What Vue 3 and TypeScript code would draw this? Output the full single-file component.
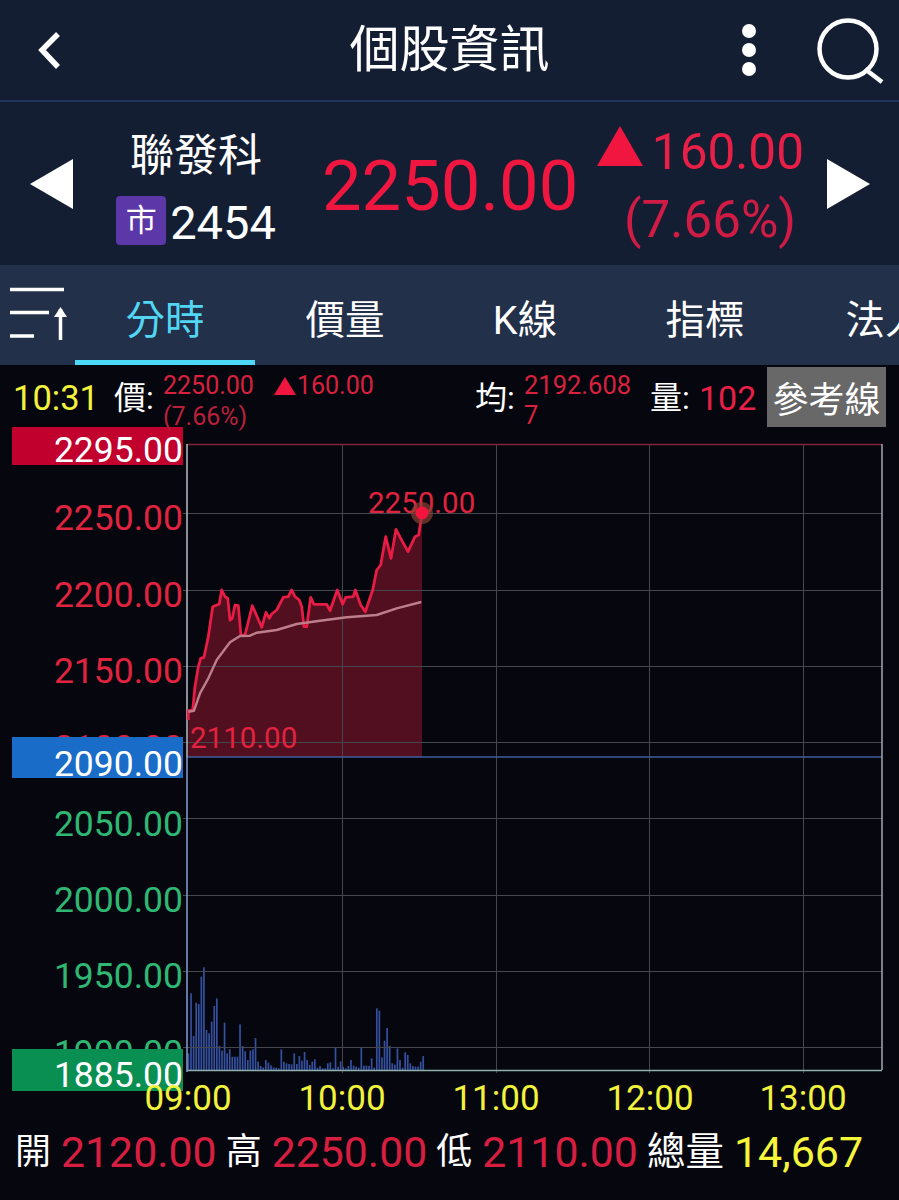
<template>
  <div class="page">
    <!-- 標題列 -->
    <header class="topbar">
      <svg class="back" width="30" height="40" viewBox="0 0 30 40">
        <path d="M24 4 L8 20 L24 37" fill="none" stroke="#fff" stroke-width="5.5" />
      </svg>
      <h1 class="title">個股資訊</h1>
      <div class="dots"><i></i><i></i><i></i></div>
      <svg class="search" width="68" height="68" viewBox="0 0 68 68">
        <circle cx="32" cy="31" r="28.5" fill="none" stroke="#fff" stroke-width="4.5" />
        <path d="M49 51 L66 64" fill="none" stroke="#fff" stroke-width="4.5" />
      </svg>
    </header>

    <!-- 報價 -->
    <section class="quote">
      <div class="tri tri-left"></div>
      <div class="name">
        <div class="stock">聯發科</div>
        <div class="code"><span class="badge">市</span><span class="code-no">2454</span></div>
      </div>
      <div class="price">2250.00</div>
      <div class="change">
        <div class="change-top"><span class="up"></span>160.00</div>
        <div class="pct">(7.66%)</div>
      </div>
      <div class="tri tri-right"></div>
    </section>

    <!-- 分頁 -->
    <nav class="tabs">
      <svg class="sort" width="75" height="60" viewBox="0 0 75 60">
        <path d="M10 9.5H64M10 32.5H49M10 56H34M60.5 60V29" fill="none" stroke="#fff" stroke-width="3.5" />
        <path d="M54 37 L60.5 27 L67 37 Z" fill="#fff" />
      </svg>
      <div v-for="(t, i) in tabs" :key="t" :class="['tab', { active: i === 0 }]">{{ t }}</div>
    </nav>

    <!-- 走勢資訊 -->
    <section class="info">
      <span class="time">10:31</span>
      <span class="lbl lbl-price">價:</span>
      <div class="info-price">
        <div class="info-line">2250.00<span class="up-small"></span>160.00</div>
        <div class="info-line dim">(7.66%)</div>
      </div>
      <span class="lbl lbl-avg">均:</span>
      <div class="info-avg">2192.6087</div>
      <span class="lbl lbl-vol">量:</span>
      <span class="vol">102</span>
      <button class="ref">參考線</button>
    </section>

    <!-- 走勢圖：座標直接對應畫面像素 -->
    <svg class="chart" width="899" height="698" viewBox="0 427 899 698">
      <polygon :points="areaPoints" fill="#510f20" />
      <rect v-for="b in bars" :key="b.x" :x="b.x" :y="b.y" width="1.7" :height="b.h" fill="#34509f" />

      <g stroke="#45474f" stroke-width="1">
        <line v-for="x in gridX" :key="x" :x1="x + 0.5" y1="444" :x2="x + 0.5" y2="1073" />
        <line v-for="y in gridY" :key="y" x1="183" :y1="y + 0.5" x2="882" :y2="y + 0.5" />
      </g>
      <line x1="187" y1="444.5" x2="882" y2="444.5" stroke="#84203a" stroke-width="1.4" />
      <line x1="187" y1="757" x2="882" y2="757" stroke="#3e5f9e" stroke-width="1.4" />
      <line x1="187" y1="1070.5" x2="882" y2="1070.5" stroke="#8fb0ad" stroke-width="1.6" />
      <line x1="187" y1="444" x2="187" y2="757" stroke="#aeb4bd" stroke-width="1.6" />
      <line x1="187" y1="757" x2="187" y2="1072" stroke="#7d97c8" stroke-width="1.6" />
      <line x1="882" y1="444" x2="882" y2="1070" stroke="#aeb4bd" stroke-width="1.4" />

      <text x="368" y="513" class="t-mid red">2250.00</text>
      <text x="190" y="748" class="t-mid red">2110.00</text>

      <polyline :points="pricePoints" fill="none" stroke="#e91c45" stroke-width="2.8" stroke-linejoin="round" />
      <polyline :points="avgPoints" fill="none" stroke="#bd7f8b" stroke-width="2.4" stroke-linejoin="round" />
      <circle cx="422" cy="513" r="11" fill="#8a4035" opacity="0.7" />
      <circle cx="422" cy="513" r="6.5" fill="#f5143f" />

      <text v-for="l in axisLabels" :key="l.text" x="183" :y="l.y" text-anchor="end" :class="['t-axis', l.cls]">{{ l.text }}</text>

      <rect x="12" y="427" width="171" height="38" fill="#c1002e" />
      <text x="183" y="462" text-anchor="end" class="t-axis white">2295.00</text>
      <rect x="12" y="737" width="171" height="41" fill="#1a6cc9" />
      <text x="183" y="776" text-anchor="end" class="t-axis white">2090.00</text>
      <rect x="12" y="1049" width="171" height="42" fill="#0a8f53" />
      <text x="183" y="1087" text-anchor="end" class="t-axis white">1885.00</text>

      <text v-for="t in timeLabels" :key="t.text" :x="t.x" y="1110" text-anchor="middle" class="t-time">{{ t.text }}</text>
    </svg>

    <!-- 開高低量 -->
    <footer class="stats">
      <div class="stat"><span>開</span><b>2120.00</b></div>
      <div class="stat"><span>高</span><b>2250.00</b></div>
      <div class="stat"><span>低</span><b>2110.00</b></div>
      <div class="stat"><span class="total-label">總量</span><b class="total">14,667</b></div>
    </footer>
  </div>
</template>

<script setup lang="ts">
const tabs = ['分時', '價量', 'K線', '指標', '法人']

const gridX = [342, 496, 649, 803]
const gridY = [513, 590, 666, 742, 818, 895, 971, 1047]

const axisLabels = [
  { text: '2250.00', y: 530, cls: 'red' },
  { text: '2200.00', y: 607, cls: 'red' },
  { text: '2150.00', y: 683, cls: 'red' },
  { text: '2100.00', y: 760, cls: 'red' },
  { text: '2050.00', y: 836, cls: 'green' },
  { text: '2000.00', y: 912, cls: 'green' },
  { text: '1950.00', y: 988, cls: 'green' },
  { text: '1900.00', y: 1065, cls: 'green' },
]

const timeLabels = [
  { text: '09:00', x: 188 },
  { text: '10:00', x: 342 },
  { text: '11:00', x: 496 },
  { text: '12:00', x: 650 },
  { text: '13:00', x: 803 },
]

// 從參考圖放大量出來的折線，crop 原點 (180, 490)，3 倍
const rawPrice = [
  [25, 690], [25, 662], [38, 660], [45, 590], [55, 530], [62, 505], [72, 502], [85, 440], [98, 350], [118, 342],
  [125, 300], [135, 320], [143, 325], [150, 390], [157, 385], [165, 345], [175, 347], [183, 437], [195, 435],
  [217, 347], [245, 412], [258, 367], [268, 385], [275, 372], [290, 360], [310, 322], [325, 320], [335, 300],
  [345, 320], [358, 330], [365, 350], [372, 410], [380, 410], [392, 322], [402, 343], [440, 343], [450, 362],
  [472, 300], [488, 343], [497, 322], [520, 320], [526, 300], [542, 345], [556, 365], [578, 300], [590, 240],
  [602, 225], [617, 140], [633, 205], [648, 118], [662, 145], [684, 185], [705, 140], [716, 135], [726, 70],
]
const rawAvg = [
  [25, 665], [42, 662], [60, 610], [85, 565], [110, 510], [150, 457], [180, 438], [210, 437], [230, 428],
  [290, 420], [350, 402], [420, 392], [500, 382], [590, 375], [650, 355], [724, 336],
]

const toScreen = (p: number[]) => `${(180 + p[0] / 3).toFixed(1)},${(490 + p[1] / 3).toFixed(1)}`

const pricePoints = rawPrice.map(toScreen).join(' ')
const avgPoints = rawAvg.map(toScreen).join(' ')
const areaPoints = `188,757 ${pricePoints} 422,757`

// 每分鐘一根，09:00 到 10:31；數字是 3 倍圖裡量到的柱高
const barHeights = [
  50, 230, 102, 202, 198, 280, 308, 120, 110, 145, 192, 215, 72, 58, 142, 50, 62, 40, 40, 40, 137, 72, 56, 30, 58, 62,
  96, 25, 12, 8, 30, 22, 14, 8, 7, 5, 62, 25, 20, 18, 17, 50, 18, 42, 28, 54, 30, 15, 25, 32, 7, 12, 5, 5, 20, 23, 5,
  68, 10, 26, 10, 5, 12, 30, 13, 10, 7, 66, 13, 13, 12, 35, 7, 185, 178, 38, 88, 126, 72, 20, 16, 65, 30, 7, 53, 45,
  20, 12, 10, 10, 25, 42,
]
const bars = barHeights.map((v, i) => {
  const h = v / 3
  return { x: +(187.6 + i * 2.58).toFixed(2), y: 1070 - h, h }
})
</script>

<style>
html,
body {
  margin: 0;
  background: #05060e;
}
</style>

<style scoped>
.page {
  width: 899px;
  height: 1200px;
  overflow: hidden;
  background: #05060e;
  font-family: Roboto, "Noto Sans CJK TC", sans-serif;
  color: #fff;
  display: flex;
  flex-direction: column;
}

.topbar {
  height: 100px;
  box-sizing: content-box;
  border-bottom: 2px solid #22345c;
  background: #141e33;
  display: flex;
  align-items: center;
  position: relative;
  flex: none;
}
.back {
  margin-left: 34px;
}
.title {
  position: absolute;
  left: 0;
  right: 0;
  margin: 0;
  text-align: center;
  font-size: 50px;
  font-weight: 400;
  line-height: 104px;
}
.dots {
  margin-left: auto;
  margin-right: 60px;
  display: flex;
  flex-direction: column;
  gap: 5px;
  position: relative;
}
.dots i {
  display: block;
  width: 14px;
  height: 14px;
  border-radius: 50%;
  background: #fff;
}
.search {
  margin-right: 15px;
  margin-top: 4px;
}

.quote {
  height: 163px;
  background: #141e33;
  display: flex;
  align-items: center;
  flex: none;
}
.tri {
  width: 0;
  height: 0;
  border-top: 25px solid transparent;
  border-bottom: 25px solid transparent;
}
.tri-left {
  margin-left: 30px;
  border-right: 43px solid #fff;
}
.tri-right {
  margin-left: 22px;
  border-left: 43px solid #fff;
}
.name {
  margin-left: 43px;
  width: 162px;
  align-self: flex-start;
  margin-top: 23px;
  display: flex;
  flex-direction: column;
  align-items: center;
}
.stock {
  font-size: 44px;
  line-height: 62px;
  margin-left: -2px;
}
.code {
  display: flex;
  align-items: center;
  font-size: 47px;
  line-height: 50px;
  gap: 4px;
  margin-top: 6px;
  margin-right: 2px;
}
.code-no {
  margin-top: 5px;
}
.badge {
  width: 50px;
  height: 49px;
  border-radius: 4px;
  background: #5b37a8;
  font-size: 31px;
  display: flex;
  align-items: center;
  justify-content: center;
}
.price {
  margin-left: 44px;
  padding-top: 4px;
  font-size: 70.5px;
  color: #ef1740;
  width: 256px;
  white-space: nowrap;
}
.change {
  margin-left: 17px;
  margin-top: 9px;
  width: 210px;
  display: flex;
  flex-direction: column;
  align-items: flex-end;
}
.change-top {
  display: flex;
  align-items: center;
  font-size: 49.5px;
  line-height: 58px;
  color: #e81f47;
  margin-right: 1px;
  gap: 9px;
}
.up {
  width: 0;
  height: 0;
  border-left: 23px solid transparent;
  border-right: 23px solid transparent;
  border-bottom: 40px solid #f0163f;
  margin-top: -12px;
}
.pct {
  font-size: 51px;
  line-height: 68px;
  margin-top: 5px;
  color: #d01c45;
  margin-right: 9px;
}

.tabs {
  height: 100px;
  background: #22304a;
  display: flex;
  flex: none;
  overflow: hidden;
}
.sort {
  flex: none;
  margin-top: 15px;
}
.tab {
  flex: none;
  width: 180px;
  box-sizing: border-box;
  text-align: center;
  font-size: 39.5px;
  line-height: 111px;
  height: 100px;
  white-space: nowrap;
}
.tab.active {
  color: #52d6f4;
  border-bottom: 5px solid #4dd8f5;
}

.info {
  height: 62px;
  display: flex;
  align-items: flex-start;
  flex: none;
  position: relative;
  z-index: 1;
}
.time {
  margin-left: 13px;
  font-size: 34.5px;
  line-height: 66px;
  color: #f2f23c;
  width: 101px;
}
.lbl {
  font-size: 32px;
  line-height: 66px;
}
.lbl-price {
  width: 49px;
}
.info-price {
  width: 312px;
  margin-top: 5px;
}
.info-line {
  display: flex;
  align-items: center;
  font-size: 25px;
  line-height: 31px;
  color: #d9213f;
}
.info-line.dim {
  color: #b8203c;
}
.up-small {
  width: 0;
  height: 0;
  margin-left: 20px;
  margin-right: 1px;
  border-left: 11px solid transparent;
  border-right: 11px solid transparent;
  border-bottom: 18px solid #f0163f;
}
.lbl-avg {
  width: 49px;
}
.info-avg {
  width: 109px;
  margin-top: 5px;
  margin-right: 17px;
  font-size: 25.5px;
  line-height: 30px;
  color: #d9213f;
  word-break: break-all;
}
.lbl-vol {
  width: 49px;
}
.vol {
  font-size: 34px;
  line-height: 66px;
  color: #e81f47;
  width: 68px;
}
.ref {
  width: 119px;
  height: 60px;
  margin-top: 2px;
  padding: 0;
  border: 0;
  background: #686868;
  color: #fff;
  font-family: inherit;
  font-size: 36px;
}

.chart {
  display: block;
  flex: none;
}
.t-axis {
  font-size: 35.5px;
}
.t-mid {
  font-size: 29.5px;
}
.t-time {
  font-size: 35px;
  fill: #f2f23c;
}
.red {
  fill: #e0233f;
}
.green {
  fill: #2fb873;
}
.white {
  fill: #fff;
}

.stats {
  flex: none;
  height: 75px;
  padding-left: 15px;
  display: flex;
  align-items: center;
  gap: 9px;
  padding-bottom: 22px;
  box-sizing: border-box;
  background: #05060e;
}
.stat {
  display: flex;
  align-items: center;
  gap: 10px;
  font-size: 36px;
  line-height: 50px;
}
.total-label {
  font-size: 38.5px;
}
.stat b {
  font-weight: 400;
  font-size: 42.8px;
  color: #d81e40;
}
.stat b.total {
  color: #f5f53c;
  font-size: 43px;
}
</style>
